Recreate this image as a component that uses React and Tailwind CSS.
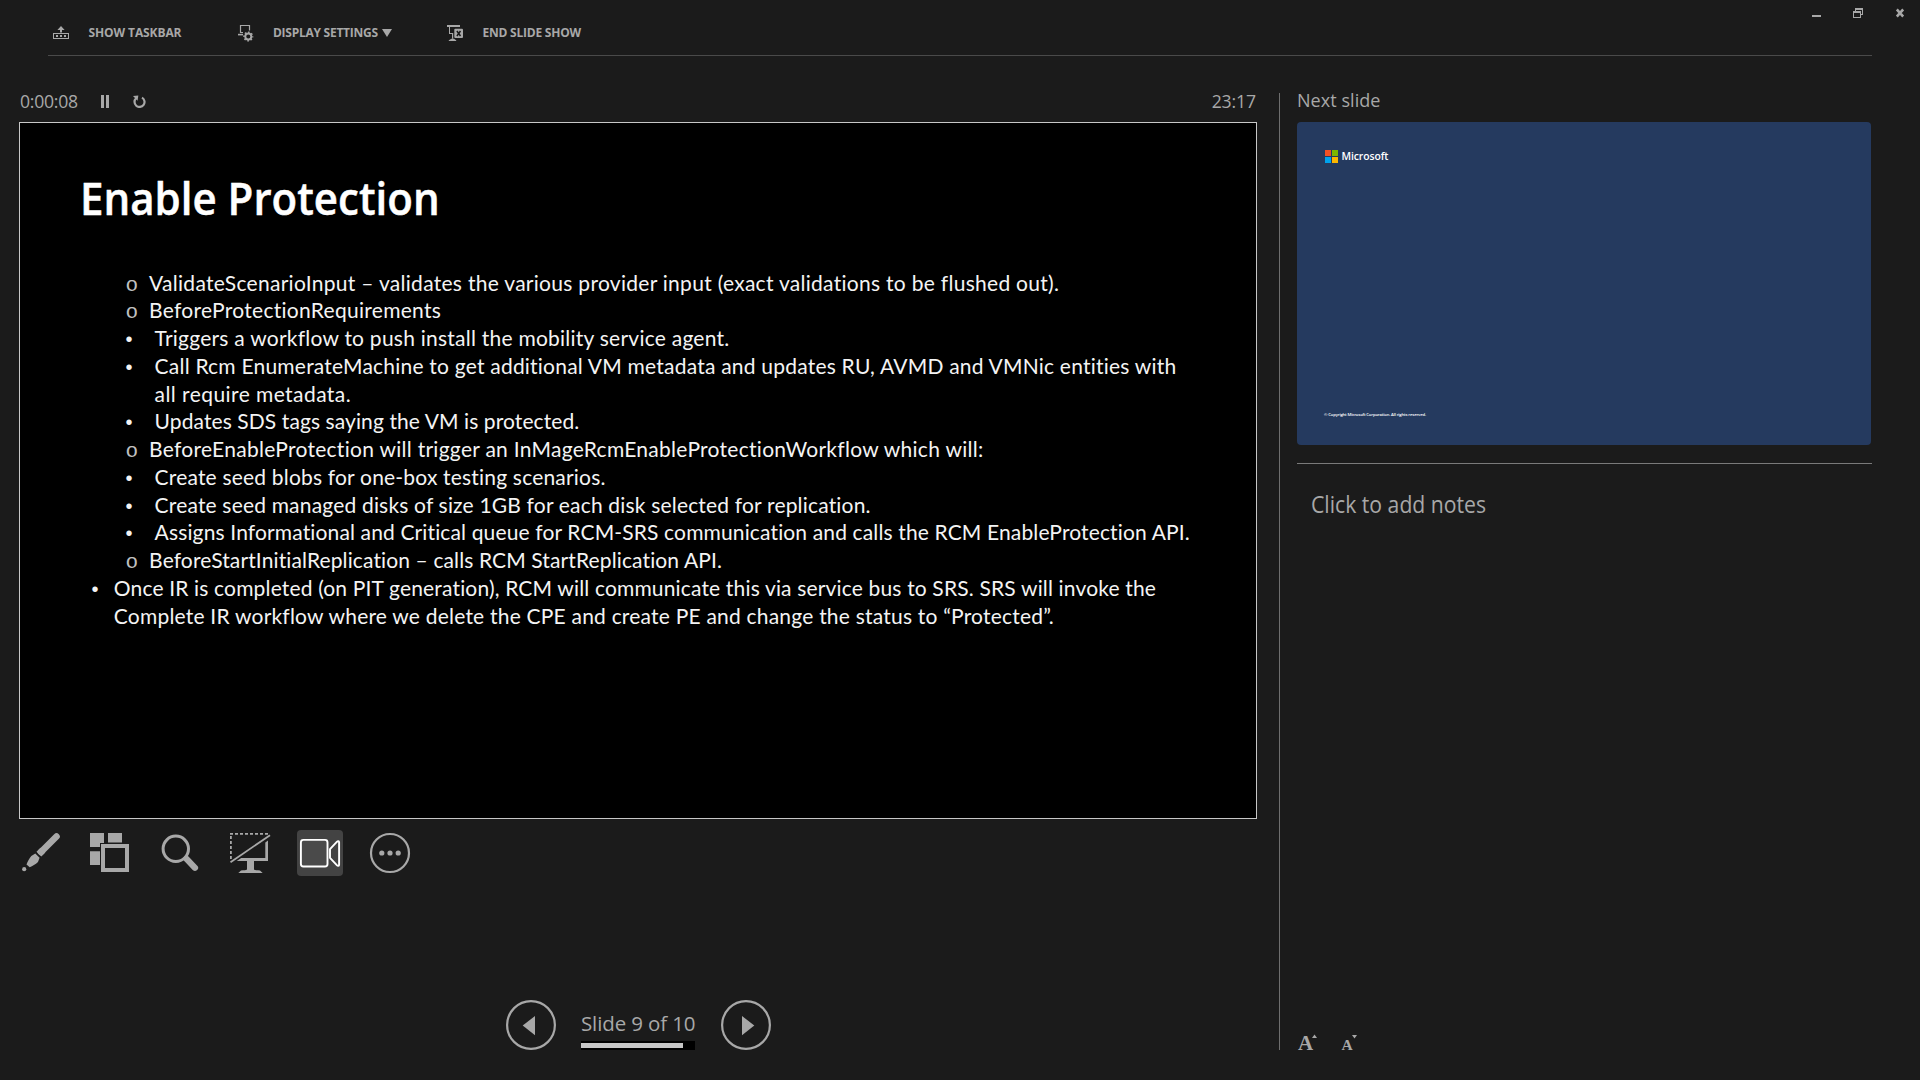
const slideLines = [
  { kind: "circle", text: "ValidateScenarioInput – validates the various provider input (exact validations to be flushed out).", track: "tracking-[0.285px]" },
  { kind: "circle", text: "BeforeProtectionRequirements", track: "tracking-[0.28px]" },
  { kind: "dot", text: "Triggers a workflow to push install the mobility service agent.", track: "tracking-[0.24px]" },
  { kind: "dot", text: "Call Rcm EnumerateMachine to get additional VM metadata and updates RU, AVMD and VMNic entities with", track: "tracking-[0.215px]" },
  { kind: "cont", text: "all require metadata.", track: "tracking-[0.43px]" },
  { kind: "dot", text: "Updates SDS tags saying the VM is protected.", track: "tracking-[0.09px]" },
  { kind: "circle", text: "BeforeEnableProtection will trigger an InMageRcmEnableProtectionWorkflow which will:", track: "tracking-[0.28px]" },
  { kind: "dot", text: "Create seed blobs for one-box testing scenarios.", track: "tracking-[0.19px]" },
  { kind: "dot", text: "Create seed managed disks of size 1GB for each disk selected for replication.", track: "tracking-[0.18px]" },
  { kind: "dot", text: "Assigns Informational and Critical queue for RCM-SRS communication and calls the RCM EnableProtection API.", track: "tracking-[0.14px]" },
  { kind: "circle", text: "BeforeStartInitialReplication – calls RCM StartReplication API.", track: "tracking-[0.12px]" },
  { kind: "outer", text: "Once IR is completed (on PIT generation), RCM will communicate this via service bus to SRS. SRS will invoke the", track: "tracking-[0.161px]" },
  { kind: "outerCont", text: "Complete IR workflow where we delete the CPE and create PE and change the status to “Protected”.", track: "tracking-[0.21px]" },
];

const kinds = {
  circle: { pad: "pl-[105.5px]", mark: "w-[23.6px] font-['Liberation_Mono',monospace] text-[21px] text-[#c0c0c0]", glyph: "o" },
  dot: { pad: "pl-[105.6px]", mark: "w-[29px] font-['Liberation_Sans',sans-serif] text-[20px]", glyph: "•" },
  cont: { pad: "pl-[105.6px]", mark: "w-[29px]", glyph: "" },
  outer: { pad: "pl-[71.6px]", mark: "w-[22.2px] font-['Liberation_Sans',sans-serif] text-[20px]", glyph: "•" },
  outerCont: { pad: "pl-[71.6px]", mark: "w-[22.2px]", glyph: "" },
};

function SlideLine({ kind, text, track }) {
  const k = kinds[kind];
  return (
    <li className={`flex h-[27.78px] items-baseline whitespace-nowrap leading-[27.78px] ${k.pad}`}>
      <span className={`shrink-0 leading-[27.78px] ${k.mark}`}>{k.glyph}</span>
      <span className={`font-[Lato,sans-serif] text-[21px] leading-[27.78px] ${track}`}>{text}</span>
    </li>
  );
}

function TaskbarIcon() {
  return (
    <svg width="16" height="18" viewBox="0 0 16 18" fill="currentColor">
      <path d="M8 2L11.6 6H9v2.6H7V6H4.4z" />
      <path fillRule="evenodd" d="M0 9h16v6H0zM1 10v4h14v-4z" />
      <path d="M3 11h2v2H3zM7 11h2v2H7zM11 11h2v2h-2z" />
    </svg>
  );
}

function DisplayIcon() {
  return (
    <svg width="16" height="18" viewBox="0 0 16 18" fill="none" stroke="currentColor">
      <path d="M5 8.5H2.500V1.500h9v5" strokeWidth="1.200" />
      <path d="M0 10.600h5" strokeWidth="1.600" />
      <circle cx="10.300" cy="12.500" r="3" strokeWidth="1.900" />
      <circle cx="10.300" cy="12.500" r="4.300" strokeWidth="1.500" strokeDasharray="1.700 1.678" strokeDashoffset="0.850" />
    </svg>
  );
}

function EndShowIcon() {
  return (
    <svg width="16" height="18" viewBox="0 0 16 18" fill="currentColor">
      <path d="M0 1h13v2H0z" />
      <path d="M2 3h1v6h3.200v5.700H5V10H2z" />
      <path d="M1.800 17v-.8l2.600-1.500h2.600l2.200 1.500v.8z" />
      <rect x="7.300" y="4.800" width="8.700" height="9.300" rx="1" />
      <path d="M9.900 7l3.600 5M13.500 7l-3.600 5" stroke="#1b1b1b" strokeWidth="1.500" />
    </svg>
  );
}

function MenuItem({ icon, label, track, className, children }) {
  return (
    <button className={`flex h-[18px] items-start text-[12px] font-bold leading-4 ${className}`}>
      {icon}
      <span className={`ml-[19.500px] mt-px whitespace-nowrap ${track}`}>{label}</span>
      {children}
    </button>
  );
}

function Header() {
  return (
    <header className="flex h-[55px] items-start">
      <nav className="flex pl-[53px] pt-6">
        <MenuItem icon={<TaskbarIcon />} label="SHOW TASKBAR" track="tracking-[-0.1px]" className="w-[184.5px]" />
        <MenuItem icon={<DisplayIcon />} label="DISPLAY SETTINGS" track="tracking-[-0.26px]" className="w-[209.5px]">
          <svg className="ml-auto mr-[55px] mt-[5px] shrink-0" width="10" height="8" viewBox="0 0 10 8" fill="currentColor">
            <path d="M0 0h10L5 8z" />
          </svg>
        </MenuItem>
        <MenuItem icon={<EndShowIcon />} label="END SLIDE SHOW" track="tracking-[-0.22px]" className="" />
      </nav>
      <div className="ml-auto flex pr-4 pt-2">
        <svg width="9" height="10" viewBox="0 0 9 10" fill="currentColor">
          <path d="M0 7h9v2H0z" />
        </svg>
        <svg className="ml-8 mr-[33px]" width="10" height="10" viewBox="0 0 10 10" fill="currentColor">
          <path d="M2 0h8v7H8V6h1V2H3v1H2z" />
          <path fillRule="evenodd" d="M0 3h8v7H0zM1 5v4h6V5z" />
        </svg>
        <svg width="8" height="10" viewBox="0 0 8 10" fill="none" stroke="currentColor" strokeWidth="2.600">
          <path d="M.8 1.500l6.400 7M7.200 1.500l-6.400 7" />
        </svg>
      </div>
    </header>
  );
}

function TimerRow() {
  return (
    <div className="ml-[3px] flex h-[66px] w-[1236px] items-start pt-[33px] text-[17.6px] leading-6">
      <span className="w-[81px] tracking-[-0.25px]">0:00:08</span>
      <svg className="mt-[6px]" width="8" height="13" viewBox="0 0 8 13" fill="currentColor">
        <path d="M0 0h3v13H0zM5 0h3v13H5z" />
      </svg>
      <svg className="ml-[23.500px] mt-[6px]" width="13" height="13" viewBox="0 0 13 13" fill="none">
        <path d="M3.100 3.300A5 5 0 1 0 9 2.600" stroke="currentColor" strokeWidth="2.200" />
        <path d="M0 1.100L5.300.400 4.600 5.800z" fill="currentColor" />
      </svg>
      <span className="ml-auto tracking-[-0.1px]">23:17</span>
    </div>
  );
}

function CurrentSlide() {
  return (
    <section className="ml-[2px] h-[697px] w-[1238px] border border-[#c8c8c8] bg-black text-[#f4f4f4]">
      <h1 className="ml-[60px] mt-[45px] origin-left scale-x-[0.934] whitespace-nowrap text-[45px] font-semibold leading-[60px] text-white [-webkit-text-stroke:0.5px_#fff]">
        Enable Protection
      </h1>
      <ul className="mt-[40.5px]">
        {slideLines.map((line) => (
          <SlideLine key={line.text} {...line} />
        ))}
      </ul>
    </section>
  );
}

function Tool({ active, children }) {
  return (
    <button className={active ? "size-[46px] rounded bg-[#434343] text-white" : "size-[46px]"}>
      <svg width="46" height="46" viewBox="0 0 46 46" fill="none">
        {children}
      </svg>
    </button>
  );
}

function Toolbar() {
  return (
    <div className="mt-[11px] flex gap-6">
      <Tool>
        <path d="M39.500 6.500L24 22" stroke="currentColor" strokeWidth="6.600" strokeLinecap="round" />
        <path d="M19.500 21.700l4.800 4.800 4-4-4.800-4.800z" fill="currentColor" />
        <path d="M18.300 23.500l4.300 4.300-1.600 4.200c-2.600 2.600-5.400 3.900-8.300 5.300l-3.200-2.800c1.400-3.100 2.600-6 4.800-8.400z" fill="currentColor" />
        <circle cx="7.200" cy="39.200" r="2.100" fill="currentColor" />
      </Tool>
      <Tool>
        <path d="M3 3h14v10h-4v4H3zM21 3h14v9.500H21zM3 21.300h10V35H3z" fill="currentColor" />
        <path d="M16 16h24v24H16z" stroke="currentColor" strokeWidth="4" />
      </Tool>
      <Tool>
        <circle cx="18.800" cy="18.800" r="12.700" stroke="currentColor" strokeWidth="3" />
        <path d="M29.500 28.800l8.500 9" stroke="currentColor" strokeWidth="6.200" strokeLinecap="round" />
      </Tool>
      <Tool>
        <path d="M3 3.900h38" stroke="currentColor" strokeWidth="1.800" strokeDasharray="3 2" />
        <path d="M3.900 6v24" stroke="currentColor" strokeWidth="1.800" strokeDasharray="3 2" />
        <path d="M3.500 32.200L43 5.200" stroke="currentColor" strokeWidth="1.800" />
        <path d="M38.300 12.500L41 10.500V31H27v8.500c1 1 3.500.5 6 1l2.700 2.500H11.300L14 40.500c2.500-.5 5 0 6-1V31H9.700l4.500-3h24.100z" fill="currentColor" />
      </Tool>
      <Tool active>
        <rect x="3.900" y="9.900" width="26.600" height="26.600" rx="2.500" fill="#4a4a4a" stroke="currentColor" strokeWidth="1.900" />
        <path d="M33 19.200l6.800-7.300c1-1 2.300-.9 2.300.4v22.400c0 1.300-1.300 1.400-2.300.4L33 27.800z" stroke="currentColor" strokeWidth="1.900" strokeLinejoin="round" />
      </Tool>
      <Tool>
        <circle cx="23" cy="23" r="19" stroke="currentColor" strokeWidth="2.200" />
        <g fill="currentColor">
          <circle cx="14.800" cy="23" r="2.600" />
          <circle cx="23" cy="23" r="2.600" />
          <circle cx="31.200" cy="23" r="2.600" />
        </g>
      </Tool>
    </div>
  );
}

function RoundButton({ d }) {
  return (
    <button className="size-[50px]">
      <svg width="50" height="50" viewBox="0 0 50 50" fill="none">
        <circle cx="25" cy="25" r="23.900" stroke="currentColor" strokeWidth="2.200" />
        <path d={d} fill="currentColor" />
      </svg>
    </button>
  );
}

function SlideNav() {
  return (
    <div className="mb-[30px] ml-[489px] mt-auto flex">
      <RoundButton d="M29 16v19.300L16.700 25.600z" />
      <div className="ml-[25px] mr-[26px] w-[114px] pt-[9px]">
        <div className="h-8 whitespace-nowrap text-[20.5px] leading-7 tracking-[-0.12px]">Slide 9 of 10</div>
        <div className="h-[9px] bg-black py-[2px]">
          <div className="h-[5px] w-[102px] bg-[#c6c6c6]" />
        </div>
      </div>
      <RoundButton d="M21 16v19.300L33.300 25.600z" />
    </div>
  );
}

function NextSlide() {
  return (
    <div className="mt-[15px] flex h-[323px] w-[574px] flex-col justify-between rounded bg-[#253a5f] px-7 pb-[27px] pt-7 text-white">
      <div className="flex items-start gap-1">
        <div className="grid grid-cols-2 gap-px">
          <div className="size-[6px] bg-[#f05125]" />
          <div className="size-[6px] bg-[#7db700]" />
          <div className="size-[6px] bg-[#00a3ee]" />
          <div className="size-[6px] bg-[#fdb700]" />
        </div>
        <span className="-ml-[0.5px] text-[10.4px] font-semibold leading-[12px] tracking-[-0.1px]">Microsoft</span>
      </div>
      <div className="-ml-px whitespace-nowrap text-[4.2px] font-semibold leading-[6px] tracking-[-0.15px]">
        © Copyright Microsoft Corporation. All rights reserved.
      </div>
    </div>
  );
}

function SidePanel() {
  return (
    <aside className="mb-[30px] mt-[37px] flex flex-col border-l border-[#6e6e6e] pl-[17px]">
      <h2 className="text-[18px] leading-[14px] tracking-[0.05px]">Next slide</h2>
      <NextSlide />
      <div className="mt-[18px] h-px w-[575px] bg-[#7a7a7a]" />
      <p className="ml-[14px] mt-[26px] origin-left scale-x-[0.921] text-[23px] leading-7">Click to add notes</p>
      <div className="mt-auto flex h-4 items-start pl-px font-['Liberation_Serif',serif] font-bold">
        <span className="w-[13.5px] text-[21px] leading-[18px]">A</span>
        <svg width="5" height="4" viewBox="0 0 5 4" fill="currentColor">
          <path d="M0 4h5L2.500.500z" />
        </svg>
        <span className="ml-[25px] w-[10px] text-[15.5px] leading-[22px]">A</span>
        <svg className="mt-px" width="5" height="4" viewBox="0 0 5 4" fill="currentColor">
          <path d="M0 0h5L2.500 3.500z" />
        </svg>
      </div>
    </aside>
  );
}

export default function App() {
  return (
    <div className="flex h-[1080px] w-[1920px] flex-col overflow-hidden bg-[#1b1b1b] font-['Open_Sans',sans-serif] text-[#a8a8a8]">
      <Header />
      <div className="mx-12 h-px bg-[#4a4a4a]" />
      <div className="flex min-h-0 flex-1">
        <main className="flex w-[1279px] flex-col pl-[17px]">
          <TimerRow />
          <CurrentSlide />
          <Toolbar />
          <SlideNav />
        </main>
        <SidePanel />
      </div>
    </div>
  );
}
